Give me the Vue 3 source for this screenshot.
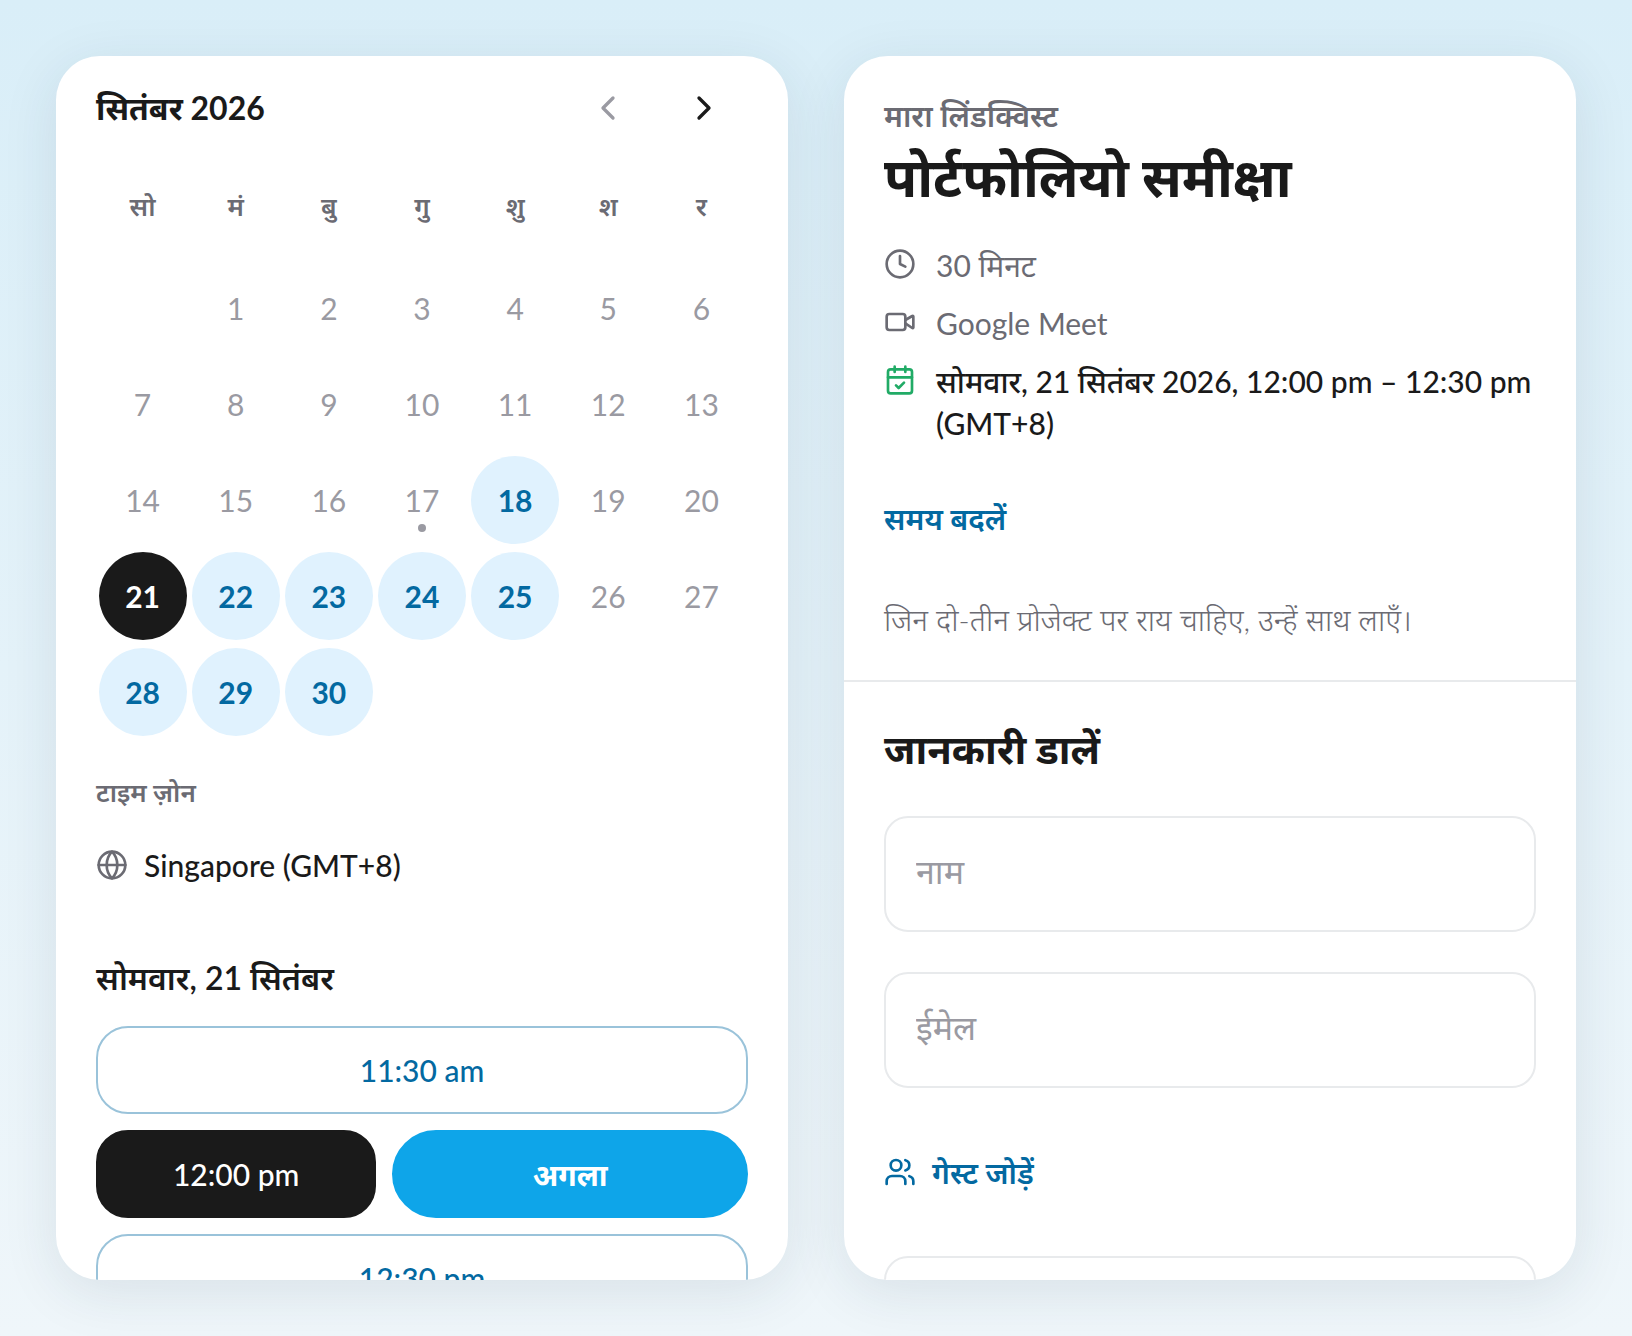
<template>
  <main class="page">
    <section class="card picker">
      <header class="month-bar">
        <h2 class="month">सितंबर 2026</h2>
        <div class="month-nav">
          <button class="nav-btn" disabled aria-label="पिछला महीना">
            <svg class="chevron" viewBox="0 0 24 24"><path d="M15 18l-6-6 6-6" /></svg>
          </button>
          <button class="nav-btn" aria-label="अगला महीना">
            <svg class="chevron" viewBox="0 0 24 24"><path d="M9 18l6-6-6-6" /></svg>
          </button>
        </div>
      </header>

      <table class="calendar">
        <thead>
          <tr>
            <th v-for="d in weekdays" :key="d" scope="col">{{ d }}</th>
          </tr>
        </thead>
        <tbody>
          <tr v-for="(week, w) in weeks" :key="w">
            <td v-for="(day, i) in week" :key="i">
              <button
                v-if="day"
                class="day"
                :class="{ open: openDays.includes(day), selected: day === selectedDay, today: day === today }"
                :disabled="!openDays.includes(day)"
                @click="selectedDay = day"
              >{{ day }}</button>
            </td>
          </tr>
        </tbody>
      </table>

      <div class="timezone">
        <h3 class="tz-label">टाइम ज़ोन</h3>
        <button class="tz-btn">
          <svg class="icon muted" viewBox="0 0 24 24">
            <circle cx="12" cy="12" r="10" />
            <path d="M2 12h20M12 2c2.800 2.900 4 6.300 4 10s-1.200 7.100-4 10c-2.800-2.900-4-6.300-4-10s1.200-7.100 4-10z" />
          </svg>
          Singapore (GMT+8)
        </button>
      </div>

      <h3 class="slots-title">सोमवार, 21 सितंबर</h3>
      <ul class="slots">
        <li v-for="t in times" :key="t" class="slot-row">
          <button class="slot" :class="{ picked: t === selectedTime }" @click="selectedTime = t">{{ t }}</button>
          <button v-if="t === selectedTime" class="next-btn">अगला</button>
        </li>
      </ul>
    </section>

    <section class="card">
      <div class="event">
        <p class="host">मारा लिंडक्विस्ट</p>
        <h1 class="title">पोर्टफोलियो समीक्षा</h1>
        <ul class="meta">
          <li>
            <svg class="icon" viewBox="0 0 24 24"><circle cx="12" cy="12" r="10" /><path d="M12 6v6l4 2" /></svg>
            <span>30 मिनट</span>
          </li>
          <li>
            <svg class="icon" viewBox="0 0 24 24">
              <rect x="2" y="6" width="14" height="12" rx="2" />
              <path d="M16 13l5.200 3.500a.5.5 0 0 0 .8-.4V7.900a.5.5 0 0 0-.8-.4L16 10.500" />
            </svg>
            <span>Google Meet</span>
          </li>
          <li class="when">
            <svg class="icon green" viewBox="0 0 24 24">
              <path d="M8 2v4M16 2v4M3 10h18M9 16l2 2 4-4" />
              <rect x="3" y="4" width="18" height="18" rx="2" />
            </svg>
            <span>सोमवार, 21 सितंबर 2026, 12:00 pm – 12:30 pm (GMT+8)</span>
          </li>
        </ul>
        <button class="text-btn">समय बदलें</button>
        <p class="note">जिन दो-तीन प्रोजेक्ट पर राय चाहिए, उन्हें साथ लाएँ।</p>
      </div>

      <form class="details" @submit.prevent>
        <h2 class="details-title">जानकारी डालें</h2>
        <input v-model="name" class="field" type="text" placeholder="नाम" aria-label="नाम" />
        <input v-model="email" class="field" type="email" placeholder="ईमेल" aria-label="ईमेल" />
        <button type="button" class="text-btn">
          <svg class="icon" viewBox="0 0 24 24">
            <path d="M16 21v-2a4 4 0 0 0-4-4H6a4 4 0 0 0-4 4v2" />
            <circle cx="9" cy="7" r="4" />
            <path d="M22 21v-2a4 4 0 0 0-3-3.870M16 3.130a4 4 0 0 1 0 7.750" />
          </svg>
          गेस्ट जोड़ें
        </button>
        <textarea v-model="message" class="field area" aria-label="संदेश"></textarea>
      </form>
    </section>
  </main>
</template>

<script setup>
import { ref } from 'vue'

const weekdays = ['सो', 'मं', 'बु', 'गु', 'शु', 'श', 'र']
const openDays = [18, 21, 22, 23, 24, 25, 28, 29, 30]
const times = ['11:30 am', '12:00 pm', '12:30 pm']
const today = 17

const selectedDay = ref(21)
const selectedTime = ref('12:00 pm')
const name = ref('')
const email = ref('')
const message = ref('')

// September 2026 starts on a Tuesday, so Monday is left blank
const weeks = Array.from({ length: 5 }, (_, w) =>
  Array.from({ length: 7 }, (_, i) => {
    const day = w * 7 + i
    return day >= 1 && day <= 30 ? day : null
  })
)
</script>

<style>
body { margin: 0; }
</style>

<style scoped>
.page {
  display: grid; grid-template-columns: 1fr 1fr; gap: 56px;
  box-sizing: border-box; height: 100vh; padding: 56px;
  background: linear-gradient(180deg, #d9eef8, #eff6fa);
  font-family: Lato, "Noto Sans", sans-serif; font-size: 30px; line-height: 42px; color: #1a1a1a;
}
.page * { box-sizing: border-box; }
h1, h2, h3, p, ul { margin: 0; padding: 0; }
ul { list-style: none; }
button {
  font: inherit; color: inherit; background: none; border: 0; padding: 0; cursor: pointer;
}
button:disabled { cursor: default; }

.card {
  display: flex; flex-direction: column; min-width: 0; overflow: hidden;
  background: #fff; border-radius: 44px; box-shadow: 0 12px 56px rgba(30, 45, 65, 0.1);
}
.picker { padding: 8px 40px 0; }
.icon {
  width: 32px; height: 32px; flex: none; fill: none;
  stroke: currentColor; stroke-width: 2; stroke-linecap: round; stroke-linejoin: round;
}
.muted { color: #6b6b73; }
.green { color: #21ab66; }

.month-bar { display: flex; align-items: center; justify-content: space-between; }
.month { font-size: 32px; line-height: 44px; font-weight: 700; }
.month-nav { display: flex; gap: 8px; }
.nav-btn { display: grid; place-items: center; width: 88px; height: 88px; }
.nav-btn:disabled { color: #9a9aa2; }
.chevron {
  width: 40px; height: 40px; fill: none;
  stroke: currentColor; stroke-width: 2; stroke-linecap: round; stroke-linejoin: round;
}

.calendar { width: 100%; flex: none; table-layout: fixed; border-collapse: collapse; }
.calendar th { height: 108px; padding: 0; font-size: 26px; font-weight: 600; color: #6b6b73; }
.calendar td { height: 96px; padding: 0; text-align: center; }
.day {
  position: relative; display: block; width: 88px; height: 88px; margin: 0 auto;
  border-radius: 50%; color: #9a9aa2;
}
.day.open { background: #e0f2fe; color: #0369a1; font-weight: 700; }
.day.selected { background: #1a1a1a; color: #fff; }
.day.today::after {
  content: ""; position: absolute; left: 40px; bottom: 12px;
  width: 8px; height: 8px; border-radius: 50%; background: currentColor;
}

.timezone { margin-top: 34px; }
.tz-label { font-size: 26px; line-height: 36px; font-weight: 600; color: #6b6b73; }
.tz-btn { display: flex; align-items: center; gap: 16px; margin-top: 34px; font-weight: 500; }

.slots-title { margin-top: 70px; font-size: 32px; line-height: 44px; font-weight: 600; }
.slots { display: grid; gap: 16px; margin-top: 26px; }
.slot-row { display: flex; gap: 16px; }
.slot, .next-btn { height: 88px; border: 2px solid #9ac3da; }
.slot { flex: 11 1 0; border-radius: 32px; color: #0369a1; font-weight: 500; }
.slot.picked { background: #1a1a1a; border-color: #1a1a1a; color: #fff; }
.next-btn {
  flex: 14 1 0; border-color: #0ea5e9; border-radius: 44px;
  background: #0ea5e9; color: #fff; font-weight: 700;
}

.event { padding: 38px 40px 40px; border-bottom: 2px solid #e8eaec; }
.host { font-weight: 600; color: #6b6b73; }
.title { font-size: 54px; line-height: 82px; font-weight: 700; }
.meta { display: grid; gap: 16px; margin-top: 26px; color: #6b6b73; }
.meta li { display: flex; gap: 20px; }
.meta .icon { margin-top: 4px; }
.meta .when { color: #1a1a1a; font-weight: 500; }
.text-btn {
  display: flex; align-items: center; gap: 16px; align-self: flex-start;
  height: 88px; color: #0369a1; font-weight: 600;
}
.event .text-btn { margin-top: 30px; }
.note { margin-top: 36px; color: #6b6b73; font-weight: 300; }

.details { display: flex; flex-direction: column; gap: 40px; padding: 40px; }
.details-title { font-size: 40px; line-height: 54px; font-weight: 700; }
.field {
  flex: none; width: 100%; height: 116px; padding: 0 30px 8px;
  border: 2px solid #e8eaec; border-radius: 24px; background: #fff;
  font: inherit; font-size: 34px; color: inherit;
}
.field::placeholder { color: #9a9aa2; opacity: 1; }
.area { height: 200px; resize: none; }
</style>
